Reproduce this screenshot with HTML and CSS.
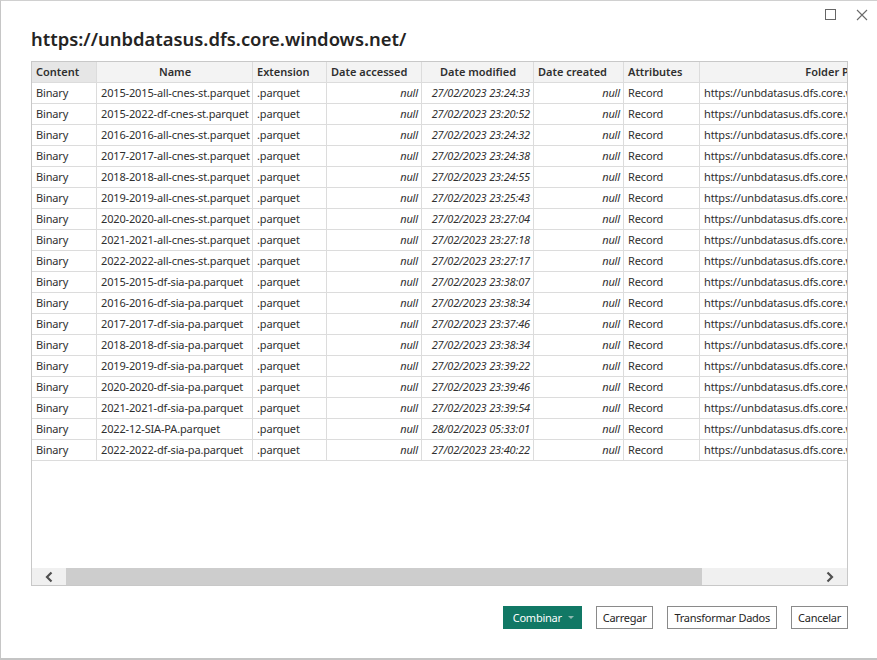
FILE: index.html
```html
<!DOCTYPE html>
<html>
<head>
<meta charset="utf-8">
<link rel="stylesheet" href="styles.css">
</head>
<body>
<div class="window">
  <div class="titlebar">
    <span class="ctl max"></span>
    <svg class="ctl close" width="12" height="12" viewBox="0 0 12 12"><path d="M1 1L11 11M11 1L1 11" stroke="#6a6a6a" stroke-width="1.1" fill="none"/></svg>
  </div>
  <h1 class="title">https://unbdatasus.dfs.core.windows.net/</h1>
  <div class="grid">
    <div class="grid-body">
      <table class="tbl">
        <thead>
          <tr>
            <th class="c-content first">Content</th>
            <th class="c-name center">Name</th>
            <th class="c-ext">Extension</th>
            <th class="c-acc">Date accessed</th>
            <th class="c-mod center">Date modified</th>
            <th class="c-cre">Date created</th>
            <th class="c-att">Attributes</th>
            <th class="c-path center">Folder Path</th>
          </tr>
        </thead>
        <tbody id="rows"></tbody>
      </table>
    </div>
    <div class="hscroll">
      <span class="arrow">
        <svg width="10" height="12" viewBox="0 0 10 12"><path d="M7.5 1.5L3 6l4.5 4.5" stroke="#505050" stroke-width="2.2" fill="none"/></svg>
      </span>
      <div class="track"><div class="thumb"></div></div>
      <span class="arrow">
        <svg width="10" height="12" viewBox="0 0 10 12"><path d="M2.5 1.5L7 6l-4.5 4.5" stroke="#505050" stroke-width="2.2" fill="none"/></svg>
      </span>
    </div>
  </div>
  <div class="actions">
    <button class="btn primary">Combinar <span class="caret"></span></button>
    <button class="btn">Carregar</button>
    <button class="btn">Transformar Dados</button>
    <button class="btn">Cancelar</button>
  </div>
</div>
<script>
const data = [
 ["2015-2015-all-cnes-st.parquet","27/02/2023 23:24:33"],
 ["2015-2022-df-cnes-st.parquet","27/02/2023 23:20:52"],
 ["2016-2016-all-cnes-st.parquet","27/02/2023 23:24:32"],
 ["2017-2017-all-cnes-st.parquet","27/02/2023 23:24:38"],
 ["2018-2018-all-cnes-st.parquet","27/02/2023 23:24:55"],
 ["2019-2019-all-cnes-st.parquet","27/02/2023 23:25:43"],
 ["2020-2020-all-cnes-st.parquet","27/02/2023 23:27:04"],
 ["2021-2021-all-cnes-st.parquet","27/02/2023 23:27:18"],
 ["2022-2022-all-cnes-st.parquet","27/02/2023 23:27:17"],
 ["2015-2015-df-sia-pa.parquet","27/02/2023 23:38:07"],
 ["2016-2016-df-sia-pa.parquet","27/02/2023 23:38:34"],
 ["2017-2017-df-sia-pa.parquet","27/02/2023 23:37:46"],
 ["2018-2018-df-sia-pa.parquet","27/02/2023 23:38:34"],
 ["2019-2019-df-sia-pa.parquet","27/02/2023 23:39:22"],
 ["2020-2020-df-sia-pa.parquet","27/02/2023 23:39:46"],
 ["2021-2021-df-sia-pa.parquet","27/02/2023 23:39:54"],
 ["2022-12-SIA-PA.parquet","28/02/2023 05:33:01"],
 ["2022-2022-df-sia-pa.parquet","27/02/2023 23:40:22"]
];
const tb = document.getElementById('rows');
tb.innerHTML = data.map(r => `<tr>
<td class="first">Binary</td><td>${r[0]}</td><td>.parquet</td>
<td class="it right">null</td><td class="it right">${r[1]}</td><td class="it right">null</td>
<td>Record</td><td>https://unbdatasus.dfs.core.windows.net/</td></tr>`).join('');
</script>
</body>
</html>
```
FILE: styles.css
```css
html, body {
  margin: 0;
  padding: 0;
  background: #ffffff;
}
body {
  font-family: "Segoe UI", "Noto Sans", "Open Sans", sans-serif;
  color: #333333;
}
.window {
  box-sizing: border-box;
  height: 660px;
  border-left: 1px solid #c6c6c6;
  border-top: 1px solid #d0d0d0;
  border-bottom: 2px solid #c4c4c4;
  display: flex;
  flex-direction: column;
  padding: 0 29px 0 30px;
}
.titlebar {
  height: 19px;
  display: flex;
  justify-content: flex-end;
  align-items: flex-start;
  gap: 20px;
  margin-right: -20px;
  padding-top: 8px;
}
.ctl.max {
  box-sizing: border-box;
  width: 11px;
  height: 11px;
  border: 1px solid #666666;
}
.title {
  margin: -3px 0 0 0;
  font-size: 18.4px;
  font-weight: 600;
  color: #252423;
  line-height: 28px;
  letter-spacing: 0;
}
.grid {
  margin-top: 8px;
  width: 817px;
  box-sizing: border-box;
  height: 525px;
  border: 1px solid #c8c8c8;
  display: flex;
  flex-direction: column;
  overflow: hidden;
}
.grid-body {
  flex: 1;
  overflow: hidden;
}
.tbl {
  border-collapse: separate;
  border-spacing: 0;
  table-layout: fixed;
  width: 940px;
  font-size: 11px;
}
.tbl th, .tbl td {
  box-sizing: border-box;
  height: 21px;
  padding: 0 3px 0 4px;
  border-right: 1px solid #dcdcdc;
  border-bottom: 1px solid #dcdcdc;
  white-space: nowrap;
  overflow: hidden;
  text-align: left;
  line-height: 20px;
  color: #2f2f2f;
}
.tbl td {
  letter-spacing: -0.15px;
}
.tbl th {
  background: #f3f3f3;
  font-weight: 600;
}
.tbl th.first { background: #e6e6e6; }
.tbl th.center { text-align: center; }
.tbl td.right { text-align: right; padding-right: 3px; }
.tbl td.it { font-style: italic; }
.c-content { width: 65px; }
.c-name { width: 156px; }
.c-ext { width: 74px; }
.c-acc { width: 95px; }
.c-mod { width: 112px; }
.c-cre { width: 90px; }
.c-att { width: 76px; }
.c-path { width: 272px; }
.hscroll {
  height: 17px;
  background: #f0f0f0;
  display: flex;
  align-items: stretch;
}
.arrow {
  width: 34px;
  display: flex;
  align-items: center;
  justify-content: center;
}
.track {
  flex: 1;
  display: flex;
}
.thumb {
  width: 636px;
  background: #cdcdcd;
}
.actions {
  display: flex;
  justify-content: flex-end;
  gap: 14px;
  margin-top: 20px;
  width: 817px;
}
.btn {
  box-sizing: border-box;
  height: 23px;
  padding: 0 6px;
  font-family: inherit;
  font-size: 11px;
  letter-spacing: -0.25px;
  color: #252423;
  background: #ffffff;
  border: 1px solid #8a8a8a;
  border-radius: 0;
}
.btn.primary {
  background: #117865;
  border-color: #117865;
  color: #ffffff;
  padding: 0 7px 0 9px;
  display: flex;
  align-items: center;
  gap: 6px;
}
.caret {
  width: 0;
  height: 0;
  border-left: 3px solid transparent;
  border-right: 3px solid transparent;
  border-top: 3px solid #8fb9b1;
}
```
